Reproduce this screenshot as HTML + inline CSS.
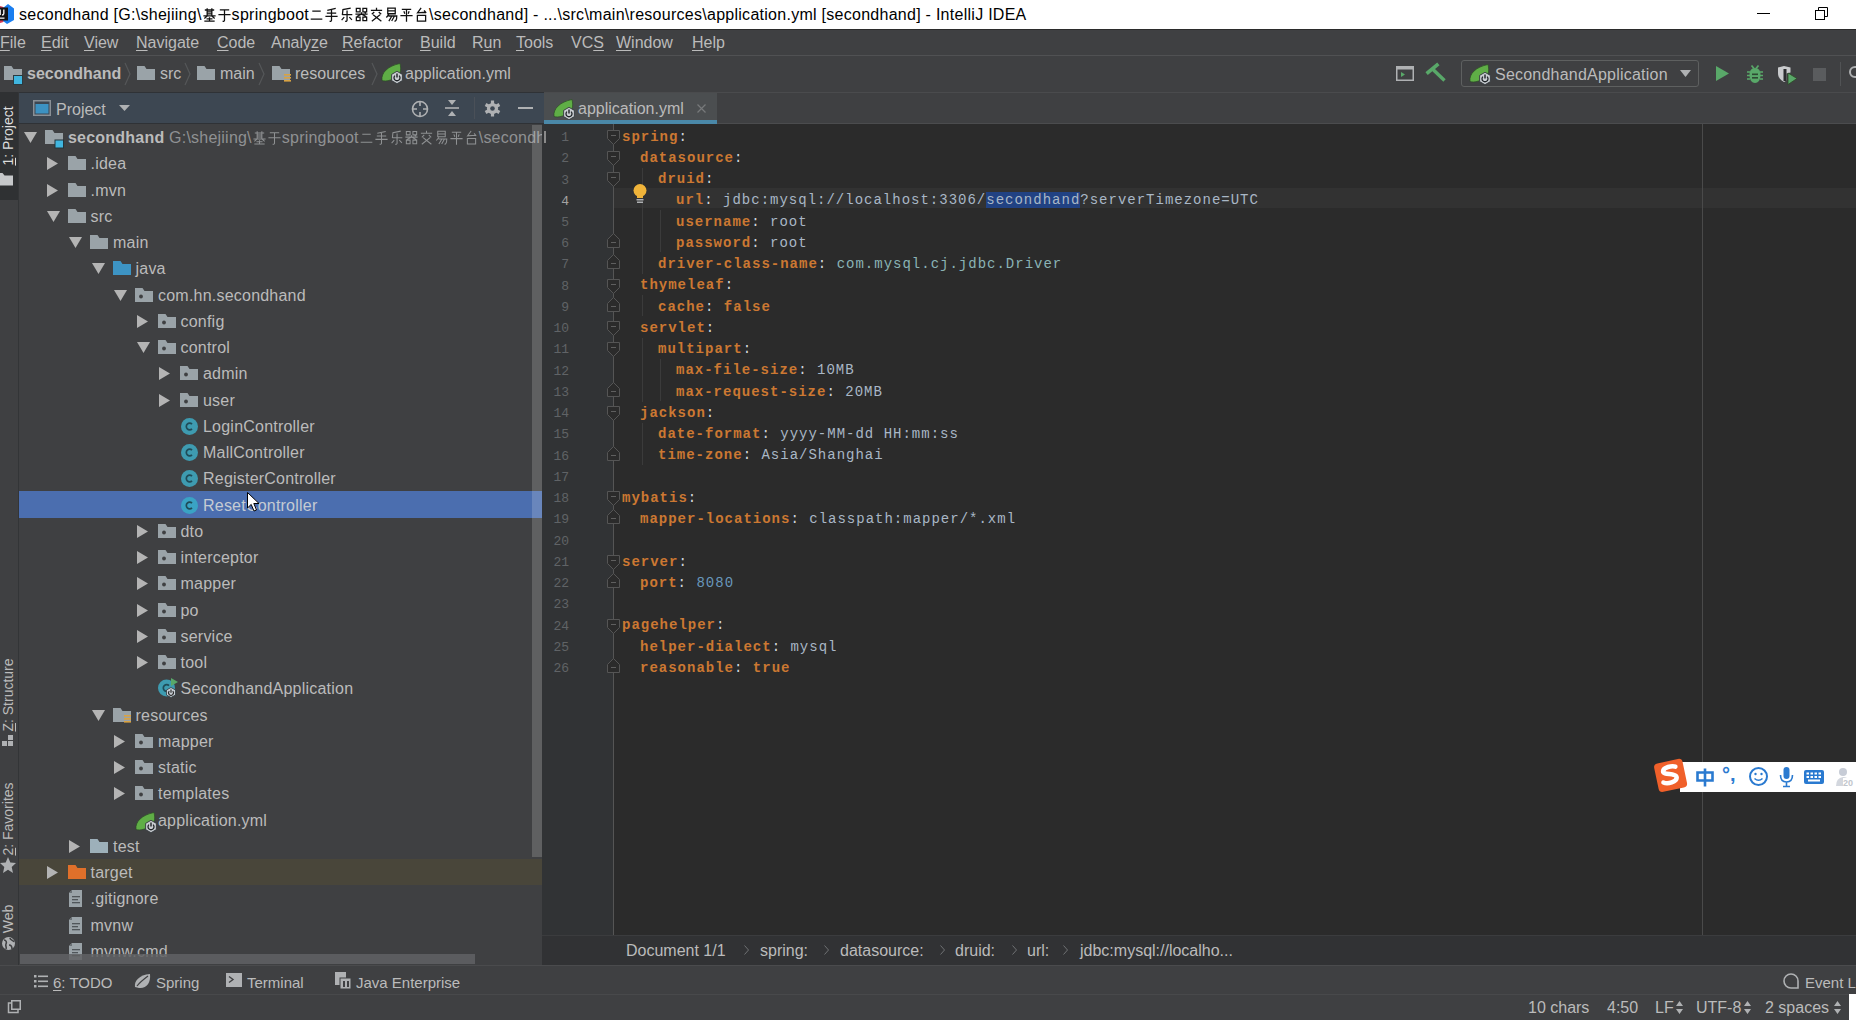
<!DOCTYPE html><html><head><meta charset="utf-8"><style>
*{margin:0;padding:0;box-sizing:border-box}
html,body{width:1856px;height:1020px;overflow:hidden;background:#3f4042;font-family:"Liberation Sans",sans-serif;color:#bbbbbb;position:relative}
.a{position:absolute;white-space:nowrap}
.t{font-size:16px;line-height:20px}
.u{text-decoration:underline;text-underline-offset:2px}
svg{position:absolute;overflow:visible}
.code{font-family:"Liberation Mono",monospace;font-size:14px;letter-spacing:1px;line-height:21px}
.k{color:#cc7832;font-weight:bold}
.c{color:#cfd6dc}
.v{color:#a9b7c6}
.n{color:#6897bb}
.cl{color:#8ab3b5}
.ln{font-family:"Liberation Mono",monospace;font-size:13px;color:#606366;text-align:right;width:30px}
</style></head><body>
<div class="a" style="left:0px;top:0px;width:1856px;height:29px;background:#ffffff;"></div>
<svg style="left:0px;top:0px" width="15" height="29" viewBox="0 0 15 29"><circle cx="-1" cy="14.5" r="8.5" fill="#d83a55"/><path d="M8 4L14 8.5V20L7 24L3 21V8Z" fill="#1a7ef0"/><rect x="-3" y="7.5" width="11" height="13" fill="#151515"/><path d="M0.2 9.5V15M3.8 9.5V13.5Q3.8 15 2 15" stroke="#eee" stroke-width="1.4" fill="none"/><rect x="-1" y="17.5" width="5.5" height="1.3" fill="#eee"/></svg>
<div class="a t" style="left:19px;top:4.5px;color:#000;font-size:16px;letter-spacing:0.27px;line-height:20px">secondhand [G:\shejiing\<span style="display:inline-block;width:15px;height:14px;position:relative;vertical-align:baseline"><svg style="position:absolute;left:0;top:1px" width="15" height="15" viewBox="0 0 16 16"><path d="M3 3.2H13M5.5 1.2V9.5M10.5 1.2V9.5M5.5 5.3H10.5M5.5 7.4H10.5M1.5 9.5H14.5M5.5 9.5L2.5 12.2M10.5 9.5L13.5 12.2M4.8 12.6H11.2M8 10.8V15M2.5 15H13.5" fill="none" stroke="#111" stroke-width="1.35"/></svg></span><span style="display:inline-block;width:15px;height:14px;position:relative;vertical-align:baseline"><svg style="position:absolute;left:0;top:1px" width="15" height="15" viewBox="0 0 16 16"><path d="M3 3H13M1.5 8.2H14.5M8 3V14.2Q8 15.4 6 15.2" fill="none" stroke="#111" stroke-width="1.35"/></svg></span>springboot<span style="display:inline-block;width:15px;height:14px;position:relative;vertical-align:baseline"><svg style="position:absolute;left:0;top:1px" width="15" height="15" viewBox="0 0 16 16"><path d="M3.5 4.5H12.5M1.8 13H14.2" fill="none" stroke="#111" stroke-width="1.35"/></svg></span><span style="display:inline-block;width:15px;height:14px;position:relative;vertical-align:baseline"><svg style="position:absolute;left:0;top:1px" width="15" height="15" viewBox="0 0 16 16"><path d="M12.5 1.5L3.5 3.5M3 6.5H13M1.5 10H14.5M8 3V14.2Q8 15.4 6 15.2" fill="none" stroke="#111" stroke-width="1.35"/></svg></span><span style="display:inline-block;width:15px;height:14px;position:relative;vertical-align:baseline"><svg style="position:absolute;left:0;top:1px" width="15" height="15" viewBox="0 0 16 16"><path d="M12.5 1.2L4.2 2.8L3.6 8.6M3.6 8.2H14.2M8.6 3.8V14.2Q8.6 15.4 6.6 15.2M5.6 10.8L2.8 14M11 10.8L13.8 13.8" fill="none" stroke="#111" stroke-width="1.35"/></svg></span><span style="display:inline-block;width:15px;height:14px;position:relative;vertical-align:baseline"><svg style="position:absolute;left:0;top:1px" width="15" height="15" viewBox="0 0 16 16"><path d="M2.5 1.5H6.5V5.2H2.5ZM9.5 1.5H13.5V5.2H9.5ZM2.5 10.8H6.5V14.6H2.5ZM9.5 10.8H13.5V14.6H9.5ZM1.5 7.6H14.5M8 5.6V7.6L3 10.2M8 7.6L13 10.2M11.2 5.4L12.6 6.6" fill="none" stroke="#111" stroke-width="1.35"/></svg></span><span style="display:inline-block;width:15px;height:14px;position:relative;vertical-align:baseline"><svg style="position:absolute;left:0;top:1px" width="15" height="15" viewBox="0 0 16 16"><path d="M8 0.8V3M2 3.5H14M5.6 5.3L3 7.8M10.4 5.3L13 7.8M11.8 8.2L3 15.2M4.4 8.2L13.2 15.2" fill="none" stroke="#111" stroke-width="1.35"/></svg></span><span style="display:inline-block;width:15px;height:14px;position:relative;vertical-align:baseline"><svg style="position:absolute;left:0;top:1px" width="15" height="15" viewBox="0 0 16 16"><path d="M4 1.3H12V7.2H4ZM4 4.2H12M5.2 8L2.5 11.2M4.8 9.6H13.6Q13.6 15.2 11.2 15.2M8.4 9.6L5.2 15M11.2 9.6L8.2 15" fill="none" stroke="#111" stroke-width="1.35"/></svg></span><span style="display:inline-block;width:15px;height:14px;position:relative;vertical-align:baseline"><svg style="position:absolute;left:0;top:1px" width="15" height="15" viewBox="0 0 16 16"><path d="M3 2.5H13M5.2 4.6L6.2 7.2M10.8 4.6L9.8 7.2M1.5 9.2H14.5M8 2.5V15.6" fill="none" stroke="#111" stroke-width="1.35"/></svg></span><span style="display:inline-block;width:15px;height:14px;position:relative;vertical-align:baseline"><svg style="position:absolute;left:0;top:1px" width="15" height="15" viewBox="0 0 16 16"><path d="M7.6 1L3.8 6.2L12.4 5.6M10.8 3.6L13 6.4M3.6 9H12.4V15H3.6Z" fill="none" stroke="#111" stroke-width="1.35"/></svg></span>\secondhand] - ...\src\main\resources\application.yml [secondhand] - IntelliJ IDEA</div>
<div class="a" style="left:1757px;top:13px;width:13px;height:1px;background:#000;"></div>
<svg style="left:1815px;top:7px" width="13" height="13" viewBox="0 0 13 13"><rect x="0.5" y="3.5" width="9" height="9" fill="none" stroke="#000"/><path d="M3.5 3.5V0.5h9v9h-3" fill="none" stroke="#000"/></svg>
<div class="a" style="left:0px;top:29px;width:1856px;height:27px;background:#3f4042;border-top:1px solid #2b2b2b;border-bottom:1px solid #505153"></div>
<div class="a t" style="left:0px;top:33px;color:#bbbbbb"><span class="u">F</span>ile</div>
<div class="a t" style="left:41px;top:33px;color:#bbbbbb"><span class="u">E</span>dit</div>
<div class="a t" style="left:84px;top:33px;color:#bbbbbb"><span class="u">V</span>iew</div>
<div class="a t" style="left:136px;top:33px;color:#bbbbbb"><span class="u">N</span>avigate</div>
<div class="a t" style="left:217px;top:33px;color:#bbbbbb"><span class="u">C</span>ode</div>
<div class="a t" style="left:271px;top:33px;color:#bbbbbb">Analy<span class="u">z</span>e</div>
<div class="a t" style="left:342px;top:33px;color:#bbbbbb"><span class="u">R</span>efactor</div>
<div class="a t" style="left:420px;top:33px;color:#bbbbbb"><span class="u">B</span>uild</div>
<div class="a t" style="left:472px;top:33px;color:#bbbbbb">R<span class="u">u</span>n</div>
<div class="a t" style="left:516px;top:33px;color:#bbbbbb"><span class="u">T</span>ools</div>
<div class="a t" style="left:571px;top:33px;color:#bbbbbb">VC<span class="u">S</span></div>
<div class="a t" style="left:616px;top:33px;color:#bbbbbb"><span class="u">W</span>indow</div>
<div class="a t" style="left:692px;top:33px;color:#bbbbbb"><span class="u">H</span>elp</div>
<div class="a" style="left:0px;top:56px;width:1856px;height:36px;background:#3f4042;"></div>
<svg style="left:4px;top:66px" width="20" height="19" viewBox="0 0 20 19"><path d="M0 0h7.5l2 3H18v11H0z" fill="#9aa3a8"/><rect x="9.5" y="9.5" width="9" height="9" fill="#40b6e0" stroke="#2b3a40" stroke-width="1"/></svg>
<div class="a t" style="left:27px;top:64px;font-weight:bold;color:#bbbbbb">secondhand</div>
<svg style="left:124px;top:63px" width="7" height="22" viewBox="0 0 7 22"><path d="M1 0L6 11L1 22" fill="none" stroke="#555759" stroke-width="1.2"/></svg>
<svg style="left:137px;top:66px" width="18" height="14" viewBox="0 0 18 14"><path d="M0 0h7.5l2 3H18v11H0z" fill="#9aa3a8"/></svg>
<div class="a t" style="left:160px;top:64px;">src</div>
<svg style="left:184px;top:63px" width="7" height="22" viewBox="0 0 7 22"><path d="M1 0L6 11L1 22" fill="none" stroke="#555759" stroke-width="1.2"/></svg>
<svg style="left:197px;top:66px" width="18" height="14" viewBox="0 0 18 14"><path d="M0 0h7.5l2 3H18v11H0z" fill="#9aa3a8"/></svg>
<div class="a t" style="left:220px;top:64px;">main</div>
<svg style="left:258px;top:63px" width="7" height="22" viewBox="0 0 7 22"><path d="M1 0L6 11L1 22" fill="none" stroke="#555759" stroke-width="1.2"/></svg>
<svg style="left:272px;top:66px" width="20" height="18" viewBox="0 0 20 18"><path d="M0 0h7.5l2 3H18v11H0z" fill="#9aa3a8"/><g fill="#d9a343"><rect x="12" y="8" width="7" height="1.6"/><rect x="12" y="11" width="7" height="1.6"/><rect x="12" y="14" width="7" height="1.6"/></g></svg>
<div class="a t" style="left:295px;top:64px;">resources</div>
<svg style="left:371px;top:63px" width="7" height="22" viewBox="0 0 7 22"><path d="M1 0L6 11L1 22" fill="none" stroke="#555759" stroke-width="1.2"/></svg>
<svg style="left:381px;top:63px" width="22" height="21" viewBox="0 0 22 21"><path d="M1 17.5C0 9.5 7 3 19 0.5C20.5 7 19.5 12 15 14.5L9.5 17C6 18.2 3 18.2 1 17.5Z" fill="#5fae46" stroke="#2d4a26" stroke-width="0.7"/><path d="M16 8.3L21.4 11.4V17.6L16 20.7L10.6 17.6V11.4Z" fill="#c9cdd1" stroke="#33393d" stroke-width="0.9"/><path d="M13.9 12.6a3 3 0 1 0 4.2 0" fill="none" stroke="#1e2226" stroke-width="1.3"/><path d="M16 10.6v4" stroke="#1e2226" stroke-width="1.4"/></svg>
<div class="a t" style="left:405px;top:64px;">application.yml</div>
<svg style="left:1396px;top:66px" width="18" height="15" viewBox="0 0 18 15"><rect x="0.75" y="0.75" width="16.5" height="13.5" fill="none" stroke="#afb1b3" stroke-width="1.5"/><rect x="1" y="1" width="16" height="2.5" fill="#afb1b3"/><path d="M5 6l4 2.5L5 11z" fill="#59a869"/></svg>
<svg style="left:1426px;top:63px" width="22" height="22" viewBox="0 0 22 22"><path d="M2 9.5L11 2" stroke="#59a869" stroke-width="3.6" stroke-linecap="square"/><path d="M6.5 6L18.5 17.5" stroke="#59a869" stroke-width="3.4"/></svg>
<div class="a" style="left:1461px;top:60px;width:238px;height:27px;background:#3f4042;border:1px solid #5e6060;border-radius:3px"></div>
<svg style="left:1469px;top:64px" width="22" height="21" viewBox="0 0 22 21"><path d="M1 17.5C0 9.5 7 3 19 0.5C20.5 7 19.5 12 15 14.5L9.5 17C6 18.2 3 18.2 1 17.5Z" fill="#5fae46" stroke="#2d4a26" stroke-width="0.7"/><path d="M16 8.3L21.4 11.4V17.6L16 20.7L10.6 17.6V11.4Z" fill="#c9cdd1" stroke="#33393d" stroke-width="0.9"/><path d="M13.9 12.6a3 3 0 1 0 4.2 0" fill="none" stroke="#1e2226" stroke-width="1.3"/><path d="M16 10.6v4" stroke="#1e2226" stroke-width="1.4"/></svg>
<div class="a t" style="left:1495px;top:65px;letter-spacing:0.22px">SecondhandApplication</div>
<svg style="left:1680px;top:70px" width="11" height="7" viewBox="0 0 11 7"><path d="M0 0h11L5.5 7z" fill="#afb1b3"/></svg>
<svg style="left:1716px;top:66px" width="13" height="15" viewBox="0 0 13 15"><path d="M0 0L13 7.5L0 15z" fill="#59a869"/></svg>
<svg style="left:1745px;top:64px" width="20" height="20" viewBox="0 0 20 20"><g stroke="#59a869" stroke-width="1.7"><path d="M6.5 1.5L9 4.5M13.5 1.5L11 4.5"/><path d="M2 8h3M15 8h3M2 11.5h3M15 11.5h3M2 15h3M15 15h3"/></g><path d="M10 4C14 4 15.5 7 15.5 11C15.5 16 13 19 10 19C7 19 4.5 16 4.5 11C4.5 7 6 4 10 4Z" fill="#59a869"/><g fill="#2e4a33"><rect x="7" y="9.5" width="6" height="1.6"/><rect x="7" y="13" width="6" height="1.6"/></g></svg>
<svg style="left:1777px;top:65px" width="21" height="20" viewBox="0 0 21 20"><path d="M1 2.5L7 1L13.5 2.5V7.5L9.5 8.5V15.5L7 17C3 15 1 12 1 8Z" fill="#c9cbcd"/><rect x="6.5" y="4" width="3" height="12" fill="#2b2d2f"/><path d="M11 8L20 13.5L11 19.5Z" fill="#59a869" stroke="#2d4a26" stroke-width="0.8"/></svg>
<div class="a" style="left:1813px;top:68px;width:13px;height:13px;background:#5a5c5e;"></div>
<div class="a" style="left:1840px;top:62px;width:1px;height:24px;background:#515355;"></div>
<svg style="left:1846px;top:66px" width="12" height="14" viewBox="0 0 12 14"><circle cx="9" cy="6" r="5" fill="none" stroke="#afb1b3" stroke-width="2"/></svg>
<div class="a" style="left:0px;top:92px;width:19px;height:902px;background:#3f4042;border-right:1px solid #333537"></div>
<div class="a" style="left:0px;top:92px;width:18px;height:108px;background:#2f3133;"></div>
<div class="a" style="left:7.5px;top:136px;transform:translate(-50%,-50%) rotate(-90deg);font-size:14px;line-height:14px;color:#bbbbbb;color:#dddddd"><span class="u">1</span>: Project</div>
<svg style="left:0px;top:173px" width="13" height="13" viewBox="0 0 13 13"><path d="M-5 0h7.5l2 2.5H13v10H-5z" fill="#c6c8ca"/></svg>
<div class="a" style="left:7.5px;top:695px;transform:translate(-50%,-50%) rotate(-90deg);font-size:14px;line-height:14px;color:#bbbbbb;"><span class="u">Z</span>: Structure</div>
<svg style="left:2px;top:735px" width="12" height="16" viewBox="0 0 12 16"><g fill="#afb1b3"><rect x="6" y="0" width="5" height="5"/><rect x="0" y="6" width="5" height="5"/><rect x="6" y="6" width="5" height="5"/></g></svg>
<div class="a" style="left:7.5px;top:819px;transform:translate(-50%,-50%) rotate(-90deg);font-size:14px;line-height:14px;color:#bbbbbb;"><span class="u">2</span>: Favorites</div>
<svg style="left:0px;top:857px" width="16" height="17" viewBox="0 0 16 17"><path d="M8 0L10.3 5.6L16 6.1L11.7 10L13 16L8 12.8L3 16L4.3 10L0 6.1L5.7 5.6Z" fill="#afb1b3"/></svg>
<div class="a" style="left:7.5px;top:919px;transform:translate(-50%,-50%) rotate(-90deg);font-size:14px;line-height:14px;color:#bbbbbb;">Web</div>
<svg style="left:1px;top:936px" width="15" height="15" viewBox="0 0 15 15"><circle cx="7.5" cy="7.5" r="6.5" fill="#afb1b3"/><path d="M3 4c2 0 3 2 2 4s1 3 0 5M9 2c0 2 3 2 4 4M8 9c2 0 3 1 3 4" stroke="#3f4042" stroke-width="1.6" fill="none"/></svg>
<div class="a" style="left:19px;top:92px;width:525px;height:873px;background:#3f4042;"></div>
<div class="a" style="left:19px;top:92px;width:525px;height:32px;background:#3d4752;border-top:1px solid #2f3236;border-bottom:1px solid #2f3236"></div>
<svg style="left:33px;top:100px" width="18" height="16" viewBox="0 0 18 16"><rect x="0.75" y="0.75" width="16.5" height="14.5" fill="none" stroke="#8a9096" stroke-width="1.5"/><rect x="2.5" y="4" width="13" height="9.5" fill="#3d92c2"/></svg>
<div class="a t" style="left:56px;top:99.5px;color:#bbbbbb">Project</div>
<svg style="left:119px;top:105px" width="11" height="6" viewBox="0 0 11 6"><path d="M0 0h11L5.5 6z" fill="#afb1b3"/></svg>
<svg style="left:411px;top:100px" width="18" height="18" viewBox="0 0 18 18"><circle cx="9" cy="9" r="7.5" fill="none" stroke="#afb1b3" stroke-width="1.6"/><path d="M9 1v5M9 12v5M1 9h5M12 9h5" stroke="#afb1b3" stroke-width="1.6"/></svg>
<svg style="left:445px;top:100px" width="14" height="16" viewBox="0 0 14 16"><path d="M0 8h14" stroke="#afb1b3" stroke-width="1.6"/><path d="M3 0h8L7 5z M3 16h8L7 11z" fill="#afb1b3"/></svg>
<div class="a" style="left:474px;top:97px;width:1px;height:22px;background:#4a5058;"></div>
<svg style="left:484px;top:100px" width="17" height="17" viewBox="0 0 17 17"><g fill="#afb1b3"><rect x="6.9" y="0.5" width="3.2" height="4" transform="rotate(0 8.5 8.5)"/><rect x="6.9" y="0.5" width="3.2" height="4" transform="rotate(60 8.5 8.5)"/><rect x="6.9" y="0.5" width="3.2" height="4" transform="rotate(120 8.5 8.5)"/><rect x="6.9" y="0.5" width="3.2" height="4" transform="rotate(180 8.5 8.5)"/><rect x="6.9" y="0.5" width="3.2" height="4" transform="rotate(240 8.5 8.5)"/><rect x="6.9" y="0.5" width="3.2" height="4" transform="rotate(300 8.5 8.5)"/><circle cx="8.5" cy="8.5" r="5.6"/></g><circle cx="8.5" cy="8.5" r="2.3" fill="#3d4752"/></svg>
<div class="a" style="left:518px;top:107px;width:15px;height:2px;background:#afb1b3;"></div>
<div class="a" style="left:19px;top:491px;width:525px;height:27px;background:#4b6eaf;"></div>
<div class="a" style="left:19px;top:859px;width:525px;height:26px;background:#49463a;"></div>
<div class="a" style="left:19px;top:124px;width:525px;height:841px;overflow:hidden">
<svg style="left:5.0px;top:8.0px" width="13" height="11" viewBox="0 0 13 11"><path d="M0 0h13L6.5 11z" fill="#b4b4b4"/></svg>
<svg style="left:26.0px;top:6.0px" width="20" height="19" viewBox="0 0 20 19"><path d="M0 0h7.5l2 3H18v11H0z" fill="#9aa3a8"/><rect x="10" y="10" width="8.5" height="8" fill="#40b6e0" stroke="#24343a" stroke-width="1"/></svg>
<div class="a t" style="left:49.0px;top:4.0px;color:#bbbbbb;letter-spacing:0.22px"><b>secondhand</b> <span style="color:#8f9193">G:\shejiing\<span style="display:inline-block;width:15px;height:14px;position:relative;vertical-align:baseline"><svg style="position:absolute;left:0;top:1px" width="15" height="15" viewBox="0 0 16 16"><path d="M3 3.2H13M5.5 1.2V9.5M10.5 1.2V9.5M5.5 5.3H10.5M5.5 7.4H10.5M1.5 9.5H14.5M5.5 9.5L2.5 12.2M10.5 9.5L13.5 12.2M4.8 12.6H11.2M8 10.8V15M2.5 15H13.5" fill="none" stroke="#8f9193" stroke-width="1.1"/></svg></span><span style="display:inline-block;width:15px;height:14px;position:relative;vertical-align:baseline"><svg style="position:absolute;left:0;top:1px" width="15" height="15" viewBox="0 0 16 16"><path d="M3 3H13M1.5 8.2H14.5M8 3V14.2Q8 15.4 6 15.2" fill="none" stroke="#8f9193" stroke-width="1.1"/></svg></span>springboot<span style="display:inline-block;width:15px;height:14px;position:relative;vertical-align:baseline"><svg style="position:absolute;left:0;top:1px" width="15" height="15" viewBox="0 0 16 16"><path d="M3.5 4.5H12.5M1.8 13H14.2" fill="none" stroke="#8f9193" stroke-width="1.1"/></svg></span><span style="display:inline-block;width:15px;height:14px;position:relative;vertical-align:baseline"><svg style="position:absolute;left:0;top:1px" width="15" height="15" viewBox="0 0 16 16"><path d="M12.5 1.5L3.5 3.5M3 6.5H13M1.5 10H14.5M8 3V14.2Q8 15.4 6 15.2" fill="none" stroke="#8f9193" stroke-width="1.1"/></svg></span><span style="display:inline-block;width:15px;height:14px;position:relative;vertical-align:baseline"><svg style="position:absolute;left:0;top:1px" width="15" height="15" viewBox="0 0 16 16"><path d="M12.5 1.2L4.2 2.8L3.6 8.6M3.6 8.2H14.2M8.6 3.8V14.2Q8.6 15.4 6.6 15.2M5.6 10.8L2.8 14M11 10.8L13.8 13.8" fill="none" stroke="#8f9193" stroke-width="1.1"/></svg></span><span style="display:inline-block;width:15px;height:14px;position:relative;vertical-align:baseline"><svg style="position:absolute;left:0;top:1px" width="15" height="15" viewBox="0 0 16 16"><path d="M2.5 1.5H6.5V5.2H2.5ZM9.5 1.5H13.5V5.2H9.5ZM2.5 10.8H6.5V14.6H2.5ZM9.5 10.8H13.5V14.6H9.5ZM1.5 7.6H14.5M8 5.6V7.6L3 10.2M8 7.6L13 10.2M11.2 5.4L12.6 6.6" fill="none" stroke="#8f9193" stroke-width="1.1"/></svg></span><span style="display:inline-block;width:15px;height:14px;position:relative;vertical-align:baseline"><svg style="position:absolute;left:0;top:1px" width="15" height="15" viewBox="0 0 16 16"><path d="M8 0.8V3M2 3.5H14M5.6 5.3L3 7.8M10.4 5.3L13 7.8M11.8 8.2L3 15.2M4.4 8.2L13.2 15.2" fill="none" stroke="#8f9193" stroke-width="1.1"/></svg></span><span style="display:inline-block;width:15px;height:14px;position:relative;vertical-align:baseline"><svg style="position:absolute;left:0;top:1px" width="15" height="15" viewBox="0 0 16 16"><path d="M4 1.3H12V7.2H4ZM4 4.2H12M5.2 8L2.5 11.2M4.8 9.6H13.6Q13.6 15.2 11.2 15.2M8.4 9.6L5.2 15M11.2 9.6L8.2 15" fill="none" stroke="#8f9193" stroke-width="1.1"/></svg></span><span style="display:inline-block;width:15px;height:14px;position:relative;vertical-align:baseline"><svg style="position:absolute;left:0;top:1px" width="15" height="15" viewBox="0 0 16 16"><path d="M3 2.5H13M5.2 4.6L6.2 7.2M10.8 4.6L9.8 7.2M1.5 9.2H14.5M8 2.5V15.6" fill="none" stroke="#8f9193" stroke-width="1.1"/></svg></span><span style="display:inline-block;width:15px;height:14px;position:relative;vertical-align:baseline"><svg style="position:absolute;left:0;top:1px" width="15" height="15" viewBox="0 0 16 16"><path d="M7.6 1L3.8 6.2L12.4 5.6M10.8 3.6L13 6.4M3.6 9H12.4V15H3.6Z" fill="none" stroke="#8f9193" stroke-width="1.1"/></svg></span>\secondhand</span></div>
<svg style="left:27.5px;top:33.25px" width="11" height="13" viewBox="0 0 11 13"><path d="M0 0L11 6.5L0 13z" fill="#b4b4b4"/></svg>
<svg style="left:48.5px;top:32.25px" width="18" height="14" viewBox="0 0 18 14"><path d="M0 0h7.5l2 3H18v11H0z" fill="#9aa3a8"/></svg>
<div class="a t" style="left:71.5px;top:30.25px;color:#bbbbbb;letter-spacing:0.22px">.idea</div>
<svg style="left:27.5px;top:59.5px" width="11" height="13" viewBox="0 0 11 13"><path d="M0 0L11 6.5L0 13z" fill="#b4b4b4"/></svg>
<svg style="left:48.5px;top:58.5px" width="18" height="14" viewBox="0 0 18 14"><path d="M0 0h7.5l2 3H18v11H0z" fill="#9aa3a8"/></svg>
<div class="a t" style="left:71.5px;top:56.5px;color:#bbbbbb;letter-spacing:0.22px">.mvn</div>
<svg style="left:27.5px;top:86.75px" width="13" height="11" viewBox="0 0 13 11"><path d="M0 0h13L6.5 11z" fill="#b4b4b4"/></svg>
<svg style="left:48.5px;top:84.75px" width="18" height="14" viewBox="0 0 18 14"><path d="M0 0h7.5l2 3H18v11H0z" fill="#9aa3a8"/></svg>
<div class="a t" style="left:71.5px;top:82.75px;color:#bbbbbb;letter-spacing:0.22px">src</div>
<svg style="left:50.0px;top:113.0px" width="13" height="11" viewBox="0 0 13 11"><path d="M0 0h13L6.5 11z" fill="#b4b4b4"/></svg>
<svg style="left:71.0px;top:111.0px" width="18" height="14" viewBox="0 0 18 14"><path d="M0 0h7.5l2 3H18v11H0z" fill="#9aa3a8"/></svg>
<div class="a t" style="left:94.0px;top:109.0px;color:#bbbbbb;letter-spacing:0.22px">main</div>
<svg style="left:72.5px;top:139.25px" width="13" height="11" viewBox="0 0 13 11"><path d="M0 0h13L6.5 11z" fill="#b4b4b4"/></svg>
<svg style="left:93.5px;top:137.25px" width="18" height="14" viewBox="0 0 18 14"><path d="M0 0h7.5l2 3H18v11H0z" fill="#3d94c4"/></svg>
<div class="a t" style="left:116.5px;top:135.25px;color:#bbbbbb;letter-spacing:0.22px">java</div>
<svg style="left:95.0px;top:165.5px" width="13" height="11" viewBox="0 0 13 11"><path d="M0 0h13L6.5 11z" fill="#b4b4b4"/></svg>
<svg style="left:116.0px;top:163.5px" width="18" height="14" viewBox="0 0 18 14"><path d="M0 0h7.5l2 3H18v11H0z" fill="#9aa3a8"/><circle cx="6" cy="8.5" r="1.9" fill="#3f4042"/></svg>
<div class="a t" style="left:139.0px;top:161.5px;color:#bbbbbb;letter-spacing:0.22px">com.hn.secondhand</div>
<svg style="left:117.5px;top:190.75px" width="11" height="13" viewBox="0 0 11 13"><path d="M0 0L11 6.5L0 13z" fill="#b4b4b4"/></svg>
<svg style="left:138.5px;top:189.75px" width="18" height="14" viewBox="0 0 18 14"><path d="M0 0h7.5l2 3H18v11H0z" fill="#9aa3a8"/><circle cx="6" cy="8.5" r="1.9" fill="#3f4042"/></svg>
<div class="a t" style="left:161.5px;top:187.75px;color:#bbbbbb;letter-spacing:0.22px">config</div>
<svg style="left:117.5px;top:218.0px" width="13" height="11" viewBox="0 0 13 11"><path d="M0 0h13L6.5 11z" fill="#b4b4b4"/></svg>
<svg style="left:138.5px;top:216.0px" width="18" height="14" viewBox="0 0 18 14"><path d="M0 0h7.5l2 3H18v11H0z" fill="#9aa3a8"/><circle cx="6" cy="8.5" r="1.9" fill="#3f4042"/></svg>
<div class="a t" style="left:161.5px;top:214.0px;color:#bbbbbb;letter-spacing:0.22px">control</div>
<svg style="left:140.0px;top:243.25px" width="11" height="13" viewBox="0 0 11 13"><path d="M0 0L11 6.5L0 13z" fill="#b4b4b4"/></svg>
<svg style="left:161.0px;top:242.25px" width="18" height="14" viewBox="0 0 18 14"><path d="M0 0h7.5l2 3H18v11H0z" fill="#9aa3a8"/><circle cx="6" cy="8.5" r="1.9" fill="#3f4042"/></svg>
<div class="a t" style="left:184.0px;top:240.25px;color:#bbbbbb;letter-spacing:0.22px">admin</div>
<svg style="left:140.0px;top:269.5px" width="11" height="13" viewBox="0 0 11 13"><path d="M0 0L11 6.5L0 13z" fill="#b4b4b4"/></svg>
<svg style="left:161.0px;top:268.5px" width="18" height="14" viewBox="0 0 18 14"><path d="M0 0h7.5l2 3H18v11H0z" fill="#9aa3a8"/><circle cx="6" cy="8.5" r="1.9" fill="#3f4042"/></svg>
<div class="a t" style="left:184.0px;top:266.5px;color:#bbbbbb;letter-spacing:0.22px">user</div>
<svg style="left:162.0px;top:293.75px" width="17" height="17" viewBox="0 0 17 17"><circle cx="8.5" cy="8.5" r="8.5" fill="#3e9bb0"/><path d="M11 6.2A3.3 3.3 0 1 0 11 10.8" fill="none" stroke="#1f4b57" stroke-width="1.7"/></svg>
<div class="a t" style="left:184.0px;top:292.75px;color:#bbbbbb;letter-spacing:0.22px">LoginController</div>
<svg style="left:162.0px;top:320.0px" width="17" height="17" viewBox="0 0 17 17"><circle cx="8.5" cy="8.5" r="8.5" fill="#3e9bb0"/><path d="M11 6.2A3.3 3.3 0 1 0 11 10.8" fill="none" stroke="#1f4b57" stroke-width="1.7"/></svg>
<div class="a t" style="left:184.0px;top:319.0px;color:#bbbbbb;letter-spacing:0.22px">MallController</div>
<svg style="left:162.0px;top:346.25px" width="17" height="17" viewBox="0 0 17 17"><circle cx="8.5" cy="8.5" r="8.5" fill="#3e9bb0"/><path d="M11 6.2A3.3 3.3 0 1 0 11 10.8" fill="none" stroke="#1f4b57" stroke-width="1.7"/></svg>
<div class="a t" style="left:184.0px;top:345.25px;color:#bbbbbb;letter-spacing:0.22px">RegisterController</div>
<svg style="left:162.0px;top:372.5px" width="17" height="17" viewBox="0 0 17 17"><circle cx="8.5" cy="8.5" r="8.5" fill="#3aa3c4"/><path d="M11 6.2A3.3 3.3 0 1 0 11 10.8" fill="none" stroke="#1f4b57" stroke-width="1.7"/></svg>
<div class="a t" style="left:184.0px;top:371.5px;color:#c5cbd3;letter-spacing:0.22px">ResetController</div>
<svg style="left:117.5px;top:400.75px" width="11" height="13" viewBox="0 0 11 13"><path d="M0 0L11 6.5L0 13z" fill="#b4b4b4"/></svg>
<svg style="left:138.5px;top:399.75px" width="18" height="14" viewBox="0 0 18 14"><path d="M0 0h7.5l2 3H18v11H0z" fill="#9aa3a8"/><circle cx="6" cy="8.5" r="1.9" fill="#3f4042"/></svg>
<div class="a t" style="left:161.5px;top:397.75px;color:#bbbbbb;letter-spacing:0.22px">dto</div>
<svg style="left:117.5px;top:427.0px" width="11" height="13" viewBox="0 0 11 13"><path d="M0 0L11 6.5L0 13z" fill="#b4b4b4"/></svg>
<svg style="left:138.5px;top:426.0px" width="18" height="14" viewBox="0 0 18 14"><path d="M0 0h7.5l2 3H18v11H0z" fill="#9aa3a8"/><circle cx="6" cy="8.5" r="1.9" fill="#3f4042"/></svg>
<div class="a t" style="left:161.5px;top:424.0px;color:#bbbbbb;letter-spacing:0.22px">interceptor</div>
<svg style="left:117.5px;top:453.25px" width="11" height="13" viewBox="0 0 11 13"><path d="M0 0L11 6.5L0 13z" fill="#b4b4b4"/></svg>
<svg style="left:138.5px;top:452.25px" width="18" height="14" viewBox="0 0 18 14"><path d="M0 0h7.5l2 3H18v11H0z" fill="#9aa3a8"/><circle cx="6" cy="8.5" r="1.9" fill="#3f4042"/></svg>
<div class="a t" style="left:161.5px;top:450.25px;color:#bbbbbb;letter-spacing:0.22px">mapper</div>
<svg style="left:117.5px;top:479.5px" width="11" height="13" viewBox="0 0 11 13"><path d="M0 0L11 6.5L0 13z" fill="#b4b4b4"/></svg>
<svg style="left:138.5px;top:478.5px" width="18" height="14" viewBox="0 0 18 14"><path d="M0 0h7.5l2 3H18v11H0z" fill="#9aa3a8"/><circle cx="6" cy="8.5" r="1.9" fill="#3f4042"/></svg>
<div class="a t" style="left:161.5px;top:476.5px;color:#bbbbbb;letter-spacing:0.22px">po</div>
<svg style="left:117.5px;top:505.75px" width="11" height="13" viewBox="0 0 11 13"><path d="M0 0L11 6.5L0 13z" fill="#b4b4b4"/></svg>
<svg style="left:138.5px;top:504.75px" width="18" height="14" viewBox="0 0 18 14"><path d="M0 0h7.5l2 3H18v11H0z" fill="#9aa3a8"/><circle cx="6" cy="8.5" r="1.9" fill="#3f4042"/></svg>
<div class="a t" style="left:161.5px;top:502.75px;color:#bbbbbb;letter-spacing:0.22px">service</div>
<svg style="left:117.5px;top:532.0px" width="11" height="13" viewBox="0 0 11 13"><path d="M0 0L11 6.5L0 13z" fill="#b4b4b4"/></svg>
<svg style="left:138.5px;top:531.0px" width="18" height="14" viewBox="0 0 18 14"><path d="M0 0h7.5l2 3H18v11H0z" fill="#9aa3a8"/><circle cx="6" cy="8.5" r="1.9" fill="#3f4042"/></svg>
<div class="a t" style="left:161.5px;top:529.0px;color:#bbbbbb;letter-spacing:0.22px">tool</div>
<svg style="left:138.5px;top:554.25px" width="20" height="20" viewBox="0 0 20 20"><circle cx="8.5" cy="10" r="8.5" fill="#3e9bb0"/><path d="M11 7.7A3.3 3.3 0 1 0 11 12.3" fill="none" stroke="#1f4b57" stroke-width="1.7"/><path d="M13 0L20 4L13 8z" fill="#59a869"/><path d="M13 9.5L17.5 12V17L13 19.5L8.5 17V12Z" fill="#c9cfd6" stroke="#2f3a40" stroke-width="0.8"/><path d="M11.3 13.2a2.4 2.4 0 1 0 3.4 0" fill="none" stroke="#2b2b2b" stroke-width="1.1"/><path d="M13 11.6v3.2" stroke="#2b2b2b" stroke-width="1.2"/></svg>
<div class="a t" style="left:161.5px;top:555.25px;color:#bbbbbb;letter-spacing:0.22px">SecondhandApplication</div>
<svg style="left:72.5px;top:585.5px" width="13" height="11" viewBox="0 0 13 11"><path d="M0 0h13L6.5 11z" fill="#b4b4b4"/></svg>
<svg style="left:93.5px;top:583.5px" width="20" height="18" viewBox="0 0 20 18"><path d="M0 0h7.5l2 3H18v11H0z" fill="#9aa3a8"/><g fill="#d9a343"><rect x="11" y="7" width="7" height="1.6"/><rect x="11" y="10" width="7" height="1.6"/><rect x="11" y="13" width="7" height="1.6"/></g></svg>
<div class="a t" style="left:116.5px;top:581.5px;color:#bbbbbb;letter-spacing:0.22px">resources</div>
<svg style="left:95.0px;top:610.75px" width="11" height="13" viewBox="0 0 11 13"><path d="M0 0L11 6.5L0 13z" fill="#b4b4b4"/></svg>
<svg style="left:116.0px;top:609.75px" width="18" height="14" viewBox="0 0 18 14"><path d="M0 0h7.5l2 3H18v11H0z" fill="#9aa3a8"/><circle cx="6" cy="8.5" r="1.9" fill="#3f4042"/></svg>
<div class="a t" style="left:139.0px;top:607.75px;color:#bbbbbb;letter-spacing:0.22px">mapper</div>
<svg style="left:95.0px;top:637.0px" width="11" height="13" viewBox="0 0 11 13"><path d="M0 0L11 6.5L0 13z" fill="#b4b4b4"/></svg>
<svg style="left:116.0px;top:636.0px" width="18" height="14" viewBox="0 0 18 14"><path d="M0 0h7.5l2 3H18v11H0z" fill="#9aa3a8"/><circle cx="6" cy="8.5" r="1.9" fill="#3f4042"/></svg>
<div class="a t" style="left:139.0px;top:634.0px;color:#bbbbbb;letter-spacing:0.22px">static</div>
<svg style="left:95.0px;top:663.25px" width="11" height="13" viewBox="0 0 11 13"><path d="M0 0L11 6.5L0 13z" fill="#b4b4b4"/></svg>
<svg style="left:116.0px;top:662.25px" width="18" height="14" viewBox="0 0 18 14"><path d="M0 0h7.5l2 3H18v11H0z" fill="#9aa3a8"/><circle cx="6" cy="8.5" r="1.9" fill="#3f4042"/></svg>
<div class="a t" style="left:139.0px;top:660.25px;color:#bbbbbb;letter-spacing:0.22px">templates</div>
<svg style="left:116.0px;top:687.5px" width="22" height="21" viewBox="0 0 22 21"><path d="M1 17.5C0 9.5 7 3 19 0.5C20.5 7 19.5 12 15 14.5L9.5 17C6 18.2 3 18.2 1 17.5Z" fill="#5fae46" stroke="#2d4a26" stroke-width="0.7"/><path d="M16 8.3L21.4 11.4V17.6L16 20.7L10.6 17.6V11.4Z" fill="#c9cdd1" stroke="#33393d" stroke-width="0.9"/><path d="M13.9 12.6a3 3 0 1 0 4.2 0" fill="none" stroke="#1e2226" stroke-width="1.3"/><path d="M16 10.6v4" stroke="#1e2226" stroke-width="1.4"/></svg>
<div class="a t" style="left:139.0px;top:686.5px;color:#bbbbbb;letter-spacing:0.22px">application.yml</div>
<svg style="left:50.0px;top:715.75px" width="11" height="13" viewBox="0 0 11 13"><path d="M0 0L11 6.5L0 13z" fill="#b4b4b4"/></svg>
<svg style="left:71.0px;top:714.75px" width="18" height="14" viewBox="0 0 18 14"><path d="M0 0h7.5l2 3H18v11H0z" fill="#9db0ba"/></svg>
<div class="a t" style="left:94.0px;top:712.75px;color:#bbbbbb;letter-spacing:0.22px">test</div>
<svg style="left:27.5px;top:742.0px" width="11" height="13" viewBox="0 0 11 13"><path d="M0 0L11 6.5L0 13z" fill="#b4b4b4"/></svg>
<svg style="left:48.5px;top:741.0px" width="18" height="14" viewBox="0 0 18 14"><path d="M0 0h7.5l2 3H18v11H0z" fill="#e0702a"/></svg>
<div class="a t" style="left:71.5px;top:739.0px;color:#bbbbbb;letter-spacing:0.22px">target</div>
<svg style="left:49.5px;top:766.25px" width="14" height="17" viewBox="0 0 14 17"><path d="M0 3L3 0H13V17H0z" fill="#9aa3a8"/><path d="M3 0v3H0" fill="#6a7176"/><g fill="#50565a"><rect x="3" y="6" width="8" height="1.3"/><rect x="3" y="9" width="6" height="1.3"/><rect x="3" y="12" width="8" height="1.3"/></g></svg>
<div class="a t" style="left:71.5px;top:765.25px;color:#bbbbbb;letter-spacing:0.22px">.gitignore</div>
<svg style="left:49.5px;top:792.5px" width="14" height="17" viewBox="0 0 14 17"><path d="M0 3L3 0H13V17H0z" fill="#9aa3a8"/><path d="M3 0v3H0" fill="#6a7176"/><g fill="#50565a"><rect x="3" y="6" width="8" height="1.3"/><rect x="3" y="9" width="6" height="1.3"/><rect x="3" y="12" width="8" height="1.3"/></g></svg>
<div class="a t" style="left:71.5px;top:791.5px;color:#bbbbbb;letter-spacing:0.22px">mvnw</div>
<svg style="left:49.5px;top:818.75px" width="14" height="17" viewBox="0 0 14 17"><path d="M0 3L3 0H13V17H0z" fill="#9aa3a8"/><path d="M3 0v3H0" fill="#6a7176"/><g fill="#50565a"><rect x="3" y="6" width="8" height="1.3"/><rect x="3" y="9" width="6" height="1.3"/><rect x="3" y="12" width="8" height="1.3"/></g></svg>
<div class="a t" style="left:71.5px;top:817.75px;color:#bbbbbb;letter-spacing:0.22px">mvnw.cmd</div>
</div>
<svg style="left:247px;top:492px" width="13" height="20" viewBox="0 0 13 20"><path d="M0.5 0.5V16L4.2 12.4L7 19L9.5 18L6.8 11.5H12Z" fill="#fff" stroke="#000" stroke-width="1"/></svg>
<div class="a" style="left:532px;top:125px;width:10px;height:732px;background:rgba(255,255,255,0.17);"></div>
<div class="a" style="left:20px;top:954px;width:455px;height:10px;background:rgba(96,98,100,0.85);"></div>
<div class="a" style="left:544px;top:92px;width:1312px;height:32px;background:#3f4042;border-top:1px solid #4a4b4d;border-bottom:1px solid #4b4c4e"></div>
<div class="a" style="left:544px;top:93px;width:173px;height:31px;background:#4b4e50;"></div>
<div class="a" style="left:544px;top:120px;width:173px;height:4px;background:#4a88a8;"></div>
<svg style="left:553px;top:99px" width="22" height="21" viewBox="0 0 22 21"><path d="M1 17.5C0 9.5 7 3 19 0.5C20.5 7 19.5 12 15 14.5L9.5 17C6 18.2 3 18.2 1 17.5Z" fill="#5fae46" stroke="#2d4a26" stroke-width="0.7"/><path d="M16 8.3L21.4 11.4V17.6L16 20.7L10.6 17.6V11.4Z" fill="#c9cdd1" stroke="#33393d" stroke-width="0.9"/><path d="M13.9 12.6a3 3 0 1 0 4.2 0" fill="none" stroke="#1e2226" stroke-width="1.3"/><path d="M16 10.6v4" stroke="#1e2226" stroke-width="1.4"/></svg>
<div class="a t" style="left:578px;top:99px;color:#bbbbbb">application.yml</div>
<svg style="left:697px;top:104px" width="9" height="9" viewBox="0 0 9 9"><path d="M0.5 0.5L8.5 8.5M8.5 0.5L0.5 8.5" stroke="#77797b" stroke-width="1.2"/></svg>
<div class="a" style="left:542px;top:124px;width:1314px;height:811px;background:#2b2b2b;"></div>
<div class="a" style="left:542px;top:124px;width:72px;height:811px;background:#313335;"></div>
<div class="a" style="left:614px;top:188px;width:1242px;height:20px;background:#323232;"></div>
<div class="a" style="left:1702px;top:124px;width:1px;height:811px;background:#4a4a4a;"></div>
<div class="a" style="left:613px;top:124px;width:1px;height:811px;background:#555555;"></div>
<div class="a" style="left:642px;top:168px;width:1px;height:106px;background:#3b3b3b;"></div>
<div class="a" style="left:642px;top:295px;width:1px;height:21px;background:#3b3b3b;"></div>
<div class="a" style="left:642px;top:338px;width:1px;height:64px;background:#3b3b3b;"></div>
<div class="a" style="left:642px;top:423px;width:1px;height:42px;background:#3b3b3b;"></div>
<div class="a" style="left:660px;top:210px;width:1px;height:42px;background:#3b3b3b;"></div>
<div class="a" style="left:660px;top:359px;width:1px;height:42px;background:#3b3b3b;"></div>
<div class="a ln" style="left:539px;top:130.0px;line-height:15px;color:#606366">1</div>
<div class="a code" style="left:622px;top:126.7px"><span class="k">spring</span><span class="c">:</span></div>
<div class="a ln" style="left:539px;top:151.2px;line-height:15px;color:#606366">2</div>
<div class="a code" style="left:640px;top:147.9px"><span class="k">datasource</span><span class="c">:</span></div>
<div class="a ln" style="left:539px;top:172.5px;line-height:15px;color:#606366">3</div>
<div class="a code" style="left:658px;top:169.2px"><span class="k">druid</span><span class="c">:</span></div>
<div class="a ln" style="left:539px;top:193.7px;line-height:15px;color:#a4a3a3">4</div>
<div class="a code" style="left:676px;top:190.4px"><span class="k">url</span><span class="c">:</span><span class="v"> jdbc:mysql://localhost:3306/</span><span class="v" style="background:#214283">secondhand</span><span class="v">?serverTimezone=UTC</span></div>
<div class="a ln" style="left:539px;top:215.0px;line-height:15px;color:#606366">5</div>
<div class="a code" style="left:676px;top:211.7px"><span class="k">username</span><span class="c">:</span><span class="v"> root</span></div>
<div class="a ln" style="left:539px;top:236.2px;line-height:15px;color:#606366">6</div>
<div class="a code" style="left:676px;top:232.9px"><span class="k">password</span><span class="c">:</span><span class="v"> root</span></div>
<div class="a ln" style="left:539px;top:257.4px;line-height:15px;color:#606366">7</div>
<div class="a code" style="left:658px;top:254.1px"><span class="k">driver-class-name</span><span class="c">:</span><span class="v"> </span><span class="cl">com.mysql.cj.jdbc.Driver</span></div>
<div class="a ln" style="left:539px;top:278.7px;line-height:15px;color:#606366">8</div>
<div class="a code" style="left:640px;top:275.4px"><span class="k">thymeleaf</span><span class="c">:</span></div>
<div class="a ln" style="left:539px;top:299.9px;line-height:15px;color:#606366">9</div>
<div class="a code" style="left:658px;top:296.6px"><span class="k">cache</span><span class="c">:</span><span class="v"> </span><span class="k">false</span></div>
<div class="a ln" style="left:539px;top:321.2px;line-height:15px;color:#606366">10</div>
<div class="a code" style="left:640px;top:317.9px"><span class="k">servlet</span><span class="c">:</span></div>
<div class="a ln" style="left:539px;top:342.4px;line-height:15px;color:#606366">11</div>
<div class="a code" style="left:658px;top:339.1px"><span class="k">multipart</span><span class="c">:</span></div>
<div class="a ln" style="left:539px;top:363.6px;line-height:15px;color:#606366">12</div>
<div class="a code" style="left:676px;top:360.3px"><span class="k">max-file-size</span><span class="c">:</span><span class="v"> 10MB</span></div>
<div class="a ln" style="left:539px;top:384.9px;line-height:15px;color:#606366">13</div>
<div class="a code" style="left:676px;top:381.6px"><span class="k">max-request-size</span><span class="c">:</span><span class="v"> 20MB</span></div>
<div class="a ln" style="left:539px;top:406.1px;line-height:15px;color:#606366">14</div>
<div class="a code" style="left:640px;top:402.8px"><span class="k">jackson</span><span class="c">:</span></div>
<div class="a ln" style="left:539px;top:427.4px;line-height:15px;color:#606366">15</div>
<div class="a code" style="left:658px;top:424.1px"><span class="k">date-format</span><span class="c">:</span><span class="v"> yyyy-MM-dd HH:mm:ss</span></div>
<div class="a ln" style="left:539px;top:448.6px;line-height:15px;color:#606366">16</div>
<div class="a code" style="left:658px;top:445.3px"><span class="k">time-zone</span><span class="c">:</span><span class="v"> Asia/Shanghai</span></div>
<div class="a ln" style="left:539px;top:469.8px;line-height:15px;color:#606366">17</div>
<div class="a ln" style="left:539px;top:491.1px;line-height:15px;color:#606366">18</div>
<div class="a code" style="left:622px;top:487.8px"><span class="k">mybatis</span><span class="c">:</span></div>
<div class="a ln" style="left:539px;top:512.3px;line-height:15px;color:#606366">19</div>
<div class="a code" style="left:640px;top:509.0px"><span class="k">mapper-locations</span><span class="c">:</span><span class="v"> classpath:mapper/*.xml</span></div>
<div class="a ln" style="left:539px;top:533.6px;line-height:15px;color:#606366">20</div>
<div class="a ln" style="left:539px;top:554.8px;line-height:15px;color:#606366">21</div>
<div class="a code" style="left:622px;top:551.5px"><span class="k">server</span><span class="c">:</span></div>
<div class="a ln" style="left:539px;top:576.0px;line-height:15px;color:#606366">22</div>
<div class="a code" style="left:640px;top:572.7px"><span class="k">port</span><span class="c">:</span><span class="v"> </span><span class="n">8080</span></div>
<div class="a ln" style="left:539px;top:597.3px;line-height:15px;color:#606366">23</div>
<div class="a ln" style="left:539px;top:618.5px;line-height:15px;color:#606366">24</div>
<div class="a code" style="left:622px;top:615.2px"><span class="k">pagehelper</span><span class="c">:</span></div>
<div class="a ln" style="left:539px;top:639.8px;line-height:15px;color:#606366">25</div>
<div class="a code" style="left:640px;top:636.5px"><span class="k">helper-dialect</span><span class="c">:</span><span class="v"> mysql</span></div>
<div class="a ln" style="left:539px;top:661.0px;line-height:15px;color:#606366">26</div>
<div class="a code" style="left:640px;top:657.7px"><span class="k">reasonable</span><span class="c">:</span><span class="v"> </span><span class="k">true</span></div>
<svg style="left:607px;top:130px" width="13" height="15" viewBox="0 0 13 15"><path d="M0.5 0.5H12.5V8.5L6.5 14.5L0.5 8.5Z" fill="#2b2b2b" stroke="#555555" stroke-width="1"/><path d="M4 5.5H9" stroke="#5f5f5f" stroke-width="1"/></svg>
<svg style="left:607px;top:151px" width="13" height="15" viewBox="0 0 13 15"><path d="M0.5 0.5H12.5V8.5L6.5 14.5L0.5 8.5Z" fill="#2b2b2b" stroke="#555555" stroke-width="1"/><path d="M4 5.5H9" stroke="#5f5f5f" stroke-width="1"/></svg>
<svg style="left:607px;top:172px" width="13" height="15" viewBox="0 0 13 15"><path d="M0.5 0.5H12.5V8.5L6.5 14.5L0.5 8.5Z" fill="#2b2b2b" stroke="#555555" stroke-width="1"/><path d="M4 5.5H9" stroke="#5f5f5f" stroke-width="1"/></svg>
<svg style="left:607px;top:279px" width="13" height="15" viewBox="0 0 13 15"><path d="M0.5 0.5H12.5V8.5L6.5 14.5L0.5 8.5Z" fill="#2b2b2b" stroke="#555555" stroke-width="1"/><path d="M4 5.5H9" stroke="#5f5f5f" stroke-width="1"/></svg>
<svg style="left:607px;top:321px" width="13" height="15" viewBox="0 0 13 15"><path d="M0.5 0.5H12.5V8.5L6.5 14.5L0.5 8.5Z" fill="#2b2b2b" stroke="#555555" stroke-width="1"/><path d="M4 5.5H9" stroke="#5f5f5f" stroke-width="1"/></svg>
<svg style="left:607px;top:342px" width="13" height="15" viewBox="0 0 13 15"><path d="M0.5 0.5H12.5V8.5L6.5 14.5L0.5 8.5Z" fill="#2b2b2b" stroke="#555555" stroke-width="1"/><path d="M4 5.5H9" stroke="#5f5f5f" stroke-width="1"/></svg>
<svg style="left:607px;top:406px" width="13" height="15" viewBox="0 0 13 15"><path d="M0.5 0.5H12.5V8.5L6.5 14.5L0.5 8.5Z" fill="#2b2b2b" stroke="#555555" stroke-width="1"/><path d="M4 5.5H9" stroke="#5f5f5f" stroke-width="1"/></svg>
<svg style="left:607px;top:491px" width="13" height="15" viewBox="0 0 13 15"><path d="M0.5 0.5H12.5V8.5L6.5 14.5L0.5 8.5Z" fill="#2b2b2b" stroke="#555555" stroke-width="1"/><path d="M4 5.5H9" stroke="#5f5f5f" stroke-width="1"/></svg>
<svg style="left:607px;top:555px" width="13" height="15" viewBox="0 0 13 15"><path d="M0.5 0.5H12.5V8.5L6.5 14.5L0.5 8.5Z" fill="#2b2b2b" stroke="#555555" stroke-width="1"/><path d="M4 5.5H9" stroke="#5f5f5f" stroke-width="1"/></svg>
<svg style="left:607px;top:619px" width="13" height="15" viewBox="0 0 13 15"><path d="M0.5 0.5H12.5V8.5L6.5 14.5L0.5 8.5Z" fill="#2b2b2b" stroke="#555555" stroke-width="1"/><path d="M4 5.5H9" stroke="#5f5f5f" stroke-width="1"/></svg>
<svg style="left:607px;top:233px" width="13" height="15" viewBox="0 0 13 15"><path d="M0.5 14.5H12.5V6.5L6.5 0.5L0.5 6.5Z" fill="#2b2b2b" stroke="#555555" stroke-width="1"/><path d="M4 9.5H9" stroke="#5f5f5f" stroke-width="1"/></svg>
<svg style="left:607px;top:254px" width="13" height="15" viewBox="0 0 13 15"><path d="M0.5 14.5H12.5V6.5L6.5 0.5L0.5 6.5Z" fill="#2b2b2b" stroke="#555555" stroke-width="1"/><path d="M4 9.5H9" stroke="#5f5f5f" stroke-width="1"/></svg>
<svg style="left:607px;top:297px" width="13" height="15" viewBox="0 0 13 15"><path d="M0.5 14.5H12.5V6.5L6.5 0.5L0.5 6.5Z" fill="#2b2b2b" stroke="#555555" stroke-width="1"/><path d="M4 9.5H9" stroke="#5f5f5f" stroke-width="1"/></svg>
<svg style="left:607px;top:382px" width="13" height="15" viewBox="0 0 13 15"><path d="M0.5 14.5H12.5V6.5L6.5 0.5L0.5 6.5Z" fill="#2b2b2b" stroke="#555555" stroke-width="1"/><path d="M4 9.5H9" stroke="#5f5f5f" stroke-width="1"/></svg>
<svg style="left:607px;top:446px" width="13" height="15" viewBox="0 0 13 15"><path d="M0.5 14.5H12.5V6.5L6.5 0.5L0.5 6.5Z" fill="#2b2b2b" stroke="#555555" stroke-width="1"/><path d="M4 9.5H9" stroke="#5f5f5f" stroke-width="1"/></svg>
<svg style="left:607px;top:509px" width="13" height="15" viewBox="0 0 13 15"><path d="M0.5 14.5H12.5V6.5L6.5 0.5L0.5 6.5Z" fill="#2b2b2b" stroke="#555555" stroke-width="1"/><path d="M4 9.5H9" stroke="#5f5f5f" stroke-width="1"/></svg>
<svg style="left:607px;top:573px" width="13" height="15" viewBox="0 0 13 15"><path d="M0.5 14.5H12.5V6.5L6.5 0.5L0.5 6.5Z" fill="#2b2b2b" stroke="#555555" stroke-width="1"/><path d="M4 9.5H9" stroke="#5f5f5f" stroke-width="1"/></svg>
<svg style="left:607px;top:658px" width="13" height="15" viewBox="0 0 13 15"><path d="M0.5 14.5H12.5V6.5L6.5 0.5L0.5 6.5Z" fill="#2b2b2b" stroke="#555555" stroke-width="1"/><path d="M4 9.5H9" stroke="#5f5f5f" stroke-width="1"/></svg>
<svg style="left:633px;top:184px" width="14" height="19" viewBox="0 0 14 19"><circle cx="7" cy="6.5" r="6.5" fill="#f0b43a"/><rect x="4" y="11" width="6" height="3" fill="#f0b43a"/><rect x="3.5" y="15" width="7" height="1.5" fill="#aeb0b2"/><rect x="4" y="17.5" width="6" height="1.5" fill="#aeb0b2"/></svg>
<div class="a" style="left:544px;top:131px;width:2px;height:12px;background:#8a8a8a;"></div>
<div class="a" style="left:542px;top:935px;width:1314px;height:30px;background:#313234;border-top:1px solid #3b3c3e"></div>
<div class="a t" style="left:626px;top:941px;color:#bbbbbb">Document 1/1</div>
<div class="a t" style="left:760px;top:941px;color:#bbbbbb">spring:</div>
<div class="a t" style="left:840px;top:941px;color:#bbbbbb">datasource:</div>
<div class="a t" style="left:955px;top:941px;color:#bbbbbb">druid:</div>
<div class="a t" style="left:1027px;top:941px;color:#bbbbbb">url:</div>
<div class="a t" style="left:1080px;top:941px;color:#bbbbbb">jdbc:mysql://localho...</div>
<svg style="left:744px;top:945px" width="5" height="10" viewBox="0 0 5 10"><path d="M0.5 0.5L4.5 5L0.5 9.5" fill="none" stroke="#6f7173" stroke-width="1"/></svg>
<svg style="left:824px;top:945px" width="5" height="10" viewBox="0 0 5 10"><path d="M0.5 0.5L4.5 5L0.5 9.5" fill="none" stroke="#6f7173" stroke-width="1"/></svg>
<svg style="left:940px;top:945px" width="5" height="10" viewBox="0 0 5 10"><path d="M0.5 0.5L4.5 5L0.5 9.5" fill="none" stroke="#6f7173" stroke-width="1"/></svg>
<svg style="left:1012px;top:945px" width="5" height="10" viewBox="0 0 5 10"><path d="M0.5 0.5L4.5 5L0.5 9.5" fill="none" stroke="#6f7173" stroke-width="1"/></svg>
<svg style="left:1063px;top:945px" width="5" height="10" viewBox="0 0 5 10"><path d="M0.5 0.5L4.5 5L0.5 9.5" fill="none" stroke="#6f7173" stroke-width="1"/></svg>
<div class="a" style="left:0px;top:965px;width:1856px;height:29px;background:#3f4042;border-top:1px solid #4a4b4d"></div>
<svg style="left:34px;top:975px" width="14" height="13" viewBox="0 0 14 13"><g fill="#afb1b3"><rect x="0" y="0" width="2.5" height="2.5"/><rect x="0" y="5" width="2.5" height="2.5"/><rect x="0" y="10" width="2.5" height="2.5"/><rect x="4" y="0.5" width="10" height="1.6"/><rect x="4" y="5.5" width="10" height="1.6"/><rect x="4" y="10.5" width="10" height="1.6"/></g></svg>
<div class="a t" style="left:53px;top:973px;font-size:15px"><span class="u">6</span>: TODO</div>
<svg style="left:134px;top:973px" width="17" height="15" viewBox="0 0 17 15"><path d="M1 14C0 8 5 2 16 1C17 10 12 16 5 15Z" fill="#afb1b3"/><path d="M3 13C6 9 10 6 14 3" stroke="#3f4042" stroke-width="1.2" fill="none"/></svg>
<div class="a t" style="left:156px;top:973px;font-size:15px">Spring</div>
<svg style="left:226px;top:973px" width="16" height="14" viewBox="0 0 16 14"><rect x="0" y="0" width="16" height="14" fill="#afb1b3"/><path d="M3 3.5L7 6.5L3 9.5" stroke="#3f4042" stroke-width="1.4" fill="none"/></svg>
<div class="a t" style="left:247px;top:973px;font-size:15px">Terminal</div>
<svg style="left:335px;top:972px" width="16" height="17" viewBox="0 0 16 17"><rect x="0" y="0" width="11" height="13" fill="#afb1b3"/><rect x="5" y="6" width="11" height="11" fill="#afb1b3" stroke="#3f4042" stroke-width="1"/><g fill="#3f4042"><rect x="8" y="9" width="2" height="6"/><rect x="12" y="9" width="2" height="6"/></g></svg>
<div class="a t" style="left:356px;top:973px;font-size:15px">Java Enterprise</div>
<svg style="left:1783px;top:973px" width="16" height="16" viewBox="0 0 16 16"><path d="M8 1A7 7 0 1 0 8 15H15V8A7 7 0 0 0 8 1Z" fill="none" stroke="#afb1b3" stroke-width="1.6"/></svg>
<div class="a t" style="left:1805px;top:973px;font-size:15px">Event Log</div>
<div class="a" style="left:0px;top:994px;width:1856px;height:26px;background:#3f4042;border-top:1px solid #48494b"></div>
<svg style="left:7px;top:1000px" width="14" height="14" viewBox="0 0 14 14"><rect x="4.75" y="0.75" width="8.5" height="8.5" fill="none" stroke="#afb1b3" stroke-width="1.5"/><path d="M4 3H1.5V12.5H11V10" fill="none" stroke="#afb1b3" stroke-width="1.5"/></svg>
<div class="a t" style="left:1528px;top:998px;font-size:16px">10 chars</div>
<div class="a t" style="left:1607px;top:998px;font-size:16px">4:50</div>
<div class="a t" style="left:1655px;top:998px;font-size:16px">LF</div>
<svg style="left:1676px;top:1001px" width="7" height="13" viewBox="0 0 7 13"><path d="M0 5L3.5 0L7 5z M0 8L3.5 13L7 8z" fill="#afb1b3"/></svg>
<div class="a t" style="left:1696px;top:998px;font-size:16px">UTF-8</div>
<svg style="left:1744px;top:1001px" width="7" height="13" viewBox="0 0 7 13"><path d="M0 5L3.5 0L7 5z M0 8L3.5 13L7 8z" fill="#afb1b3"/></svg>
<div class="a t" style="left:1765px;top:998px;font-size:16px">2 spaces</div>
<svg style="left:1834px;top:1001px" width="7" height="13" viewBox="0 0 7 13"><path d="M0 5L3.5 0L7 5z M0 8L3.5 13L7 8z" fill="#afb1b3"/></svg>
<div class="a" style="left:1849px;top:994px;width:7px;height:26px;background:#ffffff;"></div>
<div class="a" style="left:1680px;top:762px;width:176px;height:30px;background:#ffffff;"></div>
<svg style="left:1653px;top:758px" width="35" height="35" viewBox="0 0 35 35"><g transform="rotate(-12 17 17)"><rect x="3" y="3" width="29" height="29" rx="4" fill="#f0602a"/><path d="M24 10C21 8 12 8 11 12C10 16 24 16 23 21C22 25 13 26 9 23" fill="none" stroke="#fff" stroke-width="4.5" stroke-linecap="round"/></g></svg>
<svg style="left:1696px;top:768px" width="18" height="19" viewBox="0 0 18 19"><path d="M1.5 4.5H16.5V12.5H1.5ZM9 0.5V18.5" fill="none" stroke="#2a7ad0" stroke-width="2.6"/></svg>
<div class="a" style="left:1722px;top:762px;font-size:20px;font-weight:bold;color:#2a7ad0;line-height:24px">&#xb0;,</div>
<svg style="left:1749px;top:767px" width="19" height="19" viewBox="0 0 19 19"><circle cx="9.5" cy="9.5" r="8.5" fill="none" stroke="#2a7ad0" stroke-width="2"/><circle cx="6.5" cy="7" r="1.2" fill="#2a7ad0"/><circle cx="12.5" cy="7" r="1.2" fill="#2a7ad0"/><path d="M5.5 11.5Q9.5 15 13.5 11.5" fill="none" stroke="#2a7ad0" stroke-width="1.6"/></svg>
<svg style="left:1779px;top:767px" width="15" height="20" viewBox="0 0 15 20"><rect x="4.5" y="0" width="6" height="12" rx="3" fill="#2a7ad0"/><path d="M1.5 8Q1.5 15 7.5 15Q13.5 15 13.5 8M7.5 15V19M4 19.5H11" fill="none" stroke="#2a7ad0" stroke-width="1.6"/></svg>
<svg style="left:1804px;top:770px" width="20" height="14" viewBox="0 0 20 14"><rect x="0" y="0" width="20" height="14" rx="2" fill="#2a7ad0"/><g fill="#fff"><rect x="2.5" y="2.5" width="2.5" height="2"/><rect x="6.5" y="2.5" width="2.5" height="2"/><rect x="10.5" y="2.5" width="2.5" height="2"/><rect x="14.5" y="2.5" width="2.5" height="2"/><rect x="2.5" y="6" width="2.5" height="2"/><rect x="6.5" y="6" width="2.5" height="2"/><rect x="10.5" y="6" width="2.5" height="2"/><rect x="14.5" y="6" width="2.5" height="2"/><rect x="4" y="9.5" width="12" height="2"/></g></svg>
<svg style="left:1833px;top:768px" width="23" height="20" viewBox="0 0 23 20"><circle cx="10" cy="4" r="4" fill="#c7ccd6"/><path d="M3 18Q3 10 10 9Q14 9 16 12V18z" fill="#d3d7de"/><rect x="10" y="10" width="13" height="9" fill="#fff"/><text x="10" y="18" font-size="9" fill="#c2c6cc" font-family="Liberation Sans" font-weight="bold">20</text></svg>
</body></html>
